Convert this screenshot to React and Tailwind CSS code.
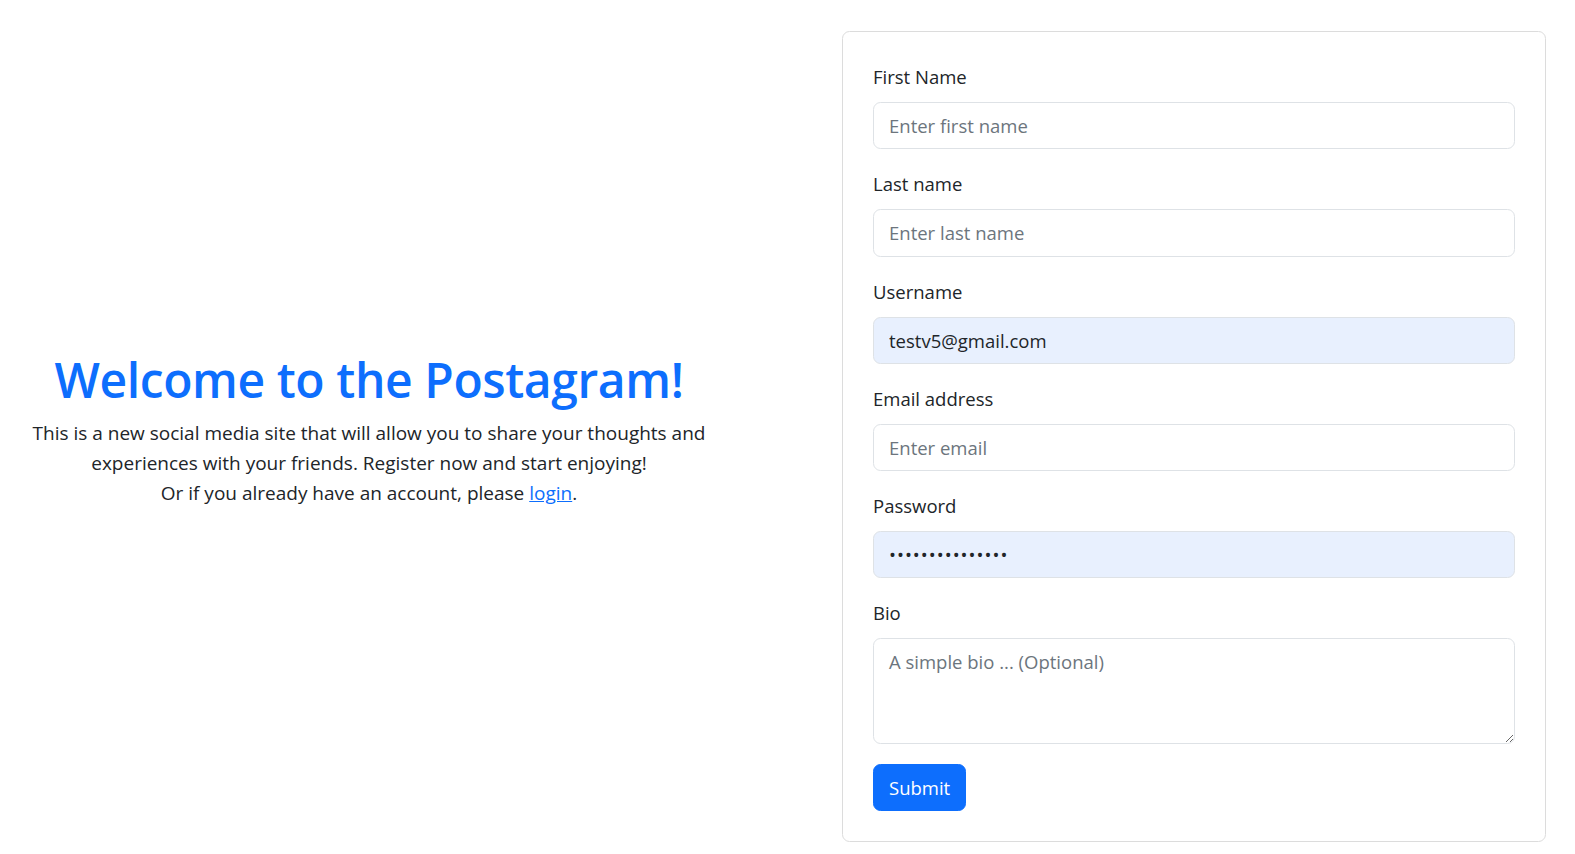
import React from "react";

const fields = [
    { label: "First Name", placeholder: "Enter first name" },
    { label: "Last name", placeholder: "Enter last name" },
    { label: "Username", value: "testv5@gmail.com", filled: true },
    { label: "Email address", placeholder: "Enter email" },
    { label: "Password", value: "testpassword123", filled: true, type: "password" },
];

const App = () => {
    return (
        <div className="min-h-screen bg-white flex items-center pt-[31px] pb-[12px] font-['Open_Sans',sans-serif] text-[#212529]">
            <div className="w-[738px] shrink-0 text-center -mt-[16px]">
                <h1 className="text-[#0d6efd] text-[48px] leading-[60px] font-semibold tracking-[-0.4px] mb-[8px]">
                    Welcome to the Postagram!
                </h1>
                <p className="text-[19px] leading-[30px]">
                    This is a new social media site that will allow you to share your thoughts and
                    <br />
                    experiences with your friends. Register now and start enjoying!
                    <br />
                    Or if you already have an account, please{" "}
                    <a href="#" className="text-[#0d6efd] underline">login</a>.
                </p>
            </div>

            <div className="ml-[104px] w-[704px] shrink-0 border border-[#dcdcdc] rounded-[7.5px] p-[30px]">
                <form onSubmit={(e) => e.preventDefault()}>
                    {fields.map((field) => (
                        <div key={field.label} className="mb-[20px]">
                            <label className="block text-[18.5px] leading-[30px] mb-[10px]">{field.label}</label>
                            <input
                                type={field.type || "text"}
                                placeholder={field.placeholder}
                                defaultValue={field.value}
                                className={`block w-full h-[47.25px] px-[15px] text-[18.5px] leading-[30px] text-[#212529] border border-[#dee2e6] rounded-[7.5px] outline-none placeholder:text-[#6c757d] ${field.filled ? "bg-[#e8f0fe]" : "bg-white"} ${field.type === "password" ? "tracking-[1px]" : ""}`}
                            />
                        </div>
                    ))}
                    <div className="mb-[20px]">
                        <label className="block text-[18.5px] leading-[30px] mb-[10px]">Bio</label>
                        <textarea
                            rows={3}
                            placeholder="A simple bio ... (Optional)"
                            className="block w-full h-[106px] px-[15px] py-[7.5px] text-[18.5px] leading-[30px] border border-[#dee2e6] rounded-[7.5px] outline-none placeholder:text-[#6c757d]"
                        />
                    </div>
                    <button
                        type="submit"
                        className="h-[47px] bg-[#0d6efd] text-white text-[18.5px] leading-[30px] px-[15px] rounded-[7.5px] border border-[#0d6efd]"
                    >
                        Submit
                    </button>
                </form>
            </div>
        </div>
    );
};

export default App;
